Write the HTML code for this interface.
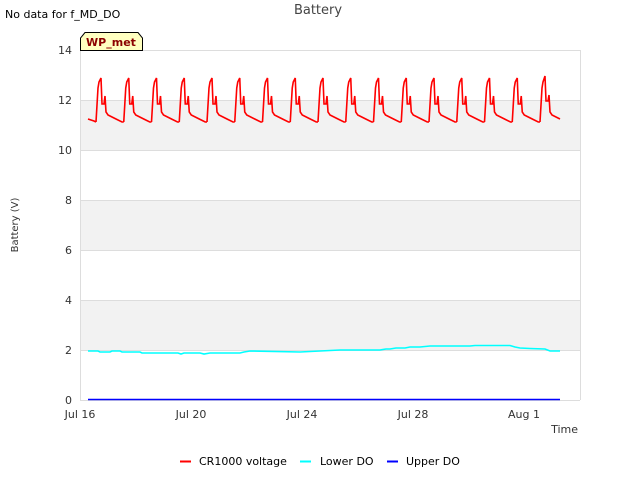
<!DOCTYPE html><html><head><style>body{margin:0;width:640px;height:480px;background:#fff;overflow:hidden;font-family:"DejaVu Sans","Liberation Sans",sans-serif}</style></head><body>
<svg width="640" height="480" xmlns="http://www.w3.org/2000/svg" font-family="DejaVu Sans, Liberation Sans, sans-serif">
<rect x="80" y="100" width="500" height="50" fill="#f2f2f2"/>
<rect x="80" y="200" width="500" height="50" fill="#f2f2f2"/>
<rect x="80" y="300" width="500" height="50" fill="#f2f2f2"/>
<g stroke="#ddd" stroke-width="1">
<line x1="80" y1="50.5" x2="580" y2="50.5"/><line x1="80" y1="100.5" x2="580" y2="100.5"/><line x1="80" y1="150.5" x2="580" y2="150.5"/><line x1="80" y1="200.5" x2="580" y2="200.5"/><line x1="80" y1="250.5" x2="580" y2="250.5"/><line x1="80" y1="300.5" x2="580" y2="300.5"/><line x1="80" y1="350.5" x2="580" y2="350.5"/><line x1="80" y1="400.5" x2="580" y2="400.5"/>
<line x1="80.5" y1="50" x2="80.5" y2="400"/><line x1="580.5" y1="50" x2="580.5" y2="400"/>
</g>
<g font-size="11" fill="#333" text-anchor="end">
<text x="72" y="54">14</text><text x="72" y="104">12</text><text x="72" y="154">10</text><text x="72" y="204">8</text><text x="72" y="254">6</text><text x="72" y="304">4</text><text x="72" y="354">2</text><text x="72" y="404">0</text>
</g>
<g font-size="11" fill="#333" text-anchor="middle">
<text x="80" y="418">Jul 16</text><text x="191" y="418">Jul 20</text><text x="302" y="418">Jul 24</text><text x="413" y="418">Jul 28</text><text x="524" y="418">Aug 1</text>
</g>
<text x="578" y="433" font-size="11" fill="#333" text-anchor="end">Time</text>
<text x="318" y="14" font-size="13" fill="#444" text-anchor="middle">Battery</text>
<text x="5" y="18" font-size="11" fill="#000">No data for f_MD_DO</text>
<text x="18" y="225" font-size="10" fill="#333" text-anchor="middle" transform="rotate(-90 18 225)">Battery (V)</text>
<path d="M80.5,50.5 V38 L85,32.5 H138 L142.5,38 V50.5 Z" fill="#ffffc0" stroke="#000"/>
<text x="111" y="46" font-size="11" font-weight="bold" fill="#8b0000" text-anchor="middle">WP_met</text>
<defs><path id="c" d="M0,122 L2,88 L3,82 L5,78 L6,104 L8,104 L9,96 L10,112 L12,115 L20,119 L26,122 L27.75,122" fill="none" stroke="#f00" stroke-width="1.6"/></defs>
<path d="M88,119 L94,121 L96,122" fill="none" stroke="#f00" stroke-width="1.6"/>
<g>
<use href="#c" x="96"/><use href="#c" x="123.75"/><use href="#c" x="151.5"/><use href="#c" x="179.25"/><use href="#c" x="207"/><use href="#c" x="234.75"/><use href="#c" x="262.5"/><use href="#c" x="290.25"/><use href="#c" x="318"/><use href="#c" x="345.75"/><use href="#c" x="373.5"/><use href="#c" x="401.25"/><use href="#c" x="429"/><use href="#c" x="456.75"/><use href="#c" x="484.5"/><use href="#c" x="512.25"/>
</g>
<path d="M540,122 L542,88 L543,82 L545,76 L546,101 L548,101 L549,95 L550,112 L552,115 L560,119" fill="none" stroke="#f00" stroke-width="1.6"/>
<path d="M88,351 L98,351 L100,352 L110,352 L112,351 L120,351 L122,352 L140,352 L142,353 L178,353 L181,354 L184,353 L200,353 L204,354 L210,353 L240,353 L244,352 L250,351 L300,352 L320,351 L340,350 L380,350 L386,349 L390,349 L396,348 L405,348 L410,347 L420,347 L430,346 L470,346 L475,345.5 L510,345.5 L515,347 L520,348 L530,348.5 L545,349 L550,351 L560,351" fill="none" stroke="#0ff" stroke-width="1.6"/>
<line x1="88" y1="399.5" x2="560" y2="399.5" stroke="#00f" stroke-width="1.5"/>
<line x1="180" y1="461.5" x2="191" y2="461.5" stroke="#f00" stroke-width="2"/>
<text x="199" y="465" font-size="11" fill="#000">CR1000 voltage</text>
<line x1="300" y1="461.5" x2="311" y2="461.5" stroke="#0ff" stroke-width="2"/>
<text x="320" y="465" font-size="11" fill="#000">Lower DO</text>
<line x1="387" y1="461.5" x2="398" y2="461.5" stroke="#00f" stroke-width="2"/>
<text x="406" y="465" font-size="11" fill="#000">Upper DO</text>
</svg>
</body></html>
